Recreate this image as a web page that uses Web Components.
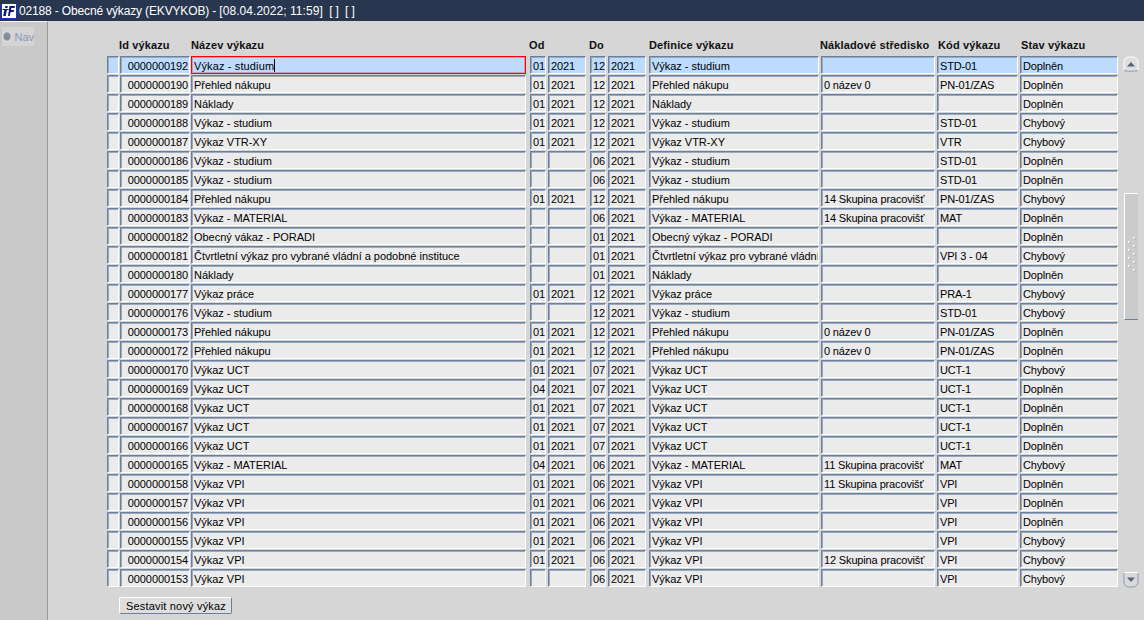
<!DOCTYPE html>
<html>
<head>
<meta charset="utf-8">
<title>Obecné výkazy</title>
<style>
  html, body { margin: 0; height: 100%; }
  body { font: 11px "Liberation Sans", Arial, sans-serif; color: #000; background: #d6d6d6; overflow: hidden; }
</style>
</head>
<body>
<app-window></app-window>
<script>
// same tracks for the header and for every row
const COLS = "13px 71px 339px 18px 42px 18px 41px 172px 116px 83px 99px";

const ROWS = [
  ["0000000192","Výkaz - studium","01","2021","12","2021","Výkaz - studium","","STD-01","Doplněn"],
  ["0000000190","Přehled nákupu","01","2021","12","2021","Přehled nákupu","0 název 0","PN-01/ZAS","Doplněn"],
  ["0000000189","Náklady","01","2021","12","2021","Náklady","","","Doplněn"],
  ["0000000188","Výkaz - studium","01","2021","12","2021","Výkaz - studium","","STD-01","Chybový"],
  ["0000000187","Výkaz VTR-XY","01","2021","12","2021","Výkaz VTR-XY","","VTR","Chybový"],
  ["0000000186","Výkaz - studium","","","06","2021","Výkaz - studium","","STD-01","Doplněn"],
  ["0000000185","Výkaz - studium","","","06","2021","Výkaz - studium","","STD-01","Doplněn"],
  ["0000000184","Přehled nákupu","01","2021","12","2021","Přehled nákupu","14 Skupina pracovišť","PN-01/ZAS","Chybový"],
  ["0000000183","Výkaz - MATERIAL","","","06","2021","Výkaz - MATERIAL","14 Skupina pracovišť","MAT","Doplněn"],
  ["0000000182","Obecný vákaz - PORADI","","","01","2021","Obecný výkaz - PORADI","","","Doplněn"],
  ["0000000181","Čtvrtletní výkaz pro vybrané vládní a podobné instituce","","","01","2021","Čtvrtletní výkaz pro vybrané vládní a podobné instituce","","VPI 3 - 04","Chybový"],
  ["0000000180","Náklady","","","01","2021","Náklady","","","Doplněn"],
  ["0000000177","Výkaz práce","01","2021","12","2021","Výkaz práce","","PRA-1","Chybový"],
  ["0000000176","Výkaz - studium","","","12","2021","Výkaz - studium","","STD-01","Chybový"],
  ["0000000173","Přehled nákupu","01","2021","12","2021","Přehled nákupu","0 název 0","PN-01/ZAS","Doplněn"],
  ["0000000172","Přehled nákupu","01","2021","12","2021","Přehled nákupu","0 název 0","PN-01/ZAS","Doplněn"],
  ["0000000170","Výkaz UCT","01","2021","07","2021","Výkaz UCT","","UCT-1","Chybový"],
  ["0000000169","Výkaz UCT","04","2021","07","2021","Výkaz UCT","","UCT-1","Doplněn"],
  ["0000000168","Výkaz UCT","01","2021","07","2021","Výkaz UCT","","UCT-1","Doplněn"],
  ["0000000167","Výkaz UCT","01","2021","07","2021","Výkaz UCT","","UCT-1","Doplněn"],
  ["0000000166","Výkaz UCT","01","2021","07","2021","Výkaz UCT","","UCT-1","Doplněn"],
  ["0000000165","Výkaz - MATERIAL","04","2021","06","2021","Výkaz - MATERIAL","11 Skupina pracovišť","MAT","Chybový"],
  ["0000000158","Výkaz VPI","01","2021","06","2021","Výkaz VPI","11 Skupina pracovišť","VPI","Doplněn"],
  ["0000000157","Výkaz VPI","01","2021","06","2021","Výkaz VPI","","VPI","Doplněn"],
  ["0000000156","Výkaz VPI","01","2021","06","2021","Výkaz VPI","","VPI","Doplněn"],
  ["0000000155","Výkaz VPI","01","2021","06","2021","Výkaz VPI","","VPI","Chybový"],
  ["0000000154","Výkaz VPI","01","2021","06","2021","Výkaz VPI","12 Skupina pracovišť","VPI","Chybový"],
  ["0000000153","Výkaz VPI","","","06","2021","Výkaz VPI","","VPI","Chybový"]
];

class TitleBar extends HTMLElement {
  constructor() {
    super();
    this.attachShadow({ mode: "open" });
    this.shadowRoot.innerHTML = `
      <style>
        :host { display: flex; align-items: center; height: 21px; background: #28374f; color: #fff; font-size: 12px; letter-spacing: -.15px; }
        svg { margin: 1px 2px 0 1px; flex: none; }
        span { white-space: pre; }
        ::slotted(span) { letter-spacing: .05px; }
      </style>
      <svg width="16" height="16" viewBox="0 0 16 16">
        <rect x="0.5" y="0.5" width="15" height="15" fill="#fff" stroke="#1a2fd0"/>
        <path d="M3.4 6.5h2.6l-1.3 6.5H2.2zM4.4 3h2.4l-.4 2H4z" fill="#0a1a70"/>
        <path d="M8.5 3H14l-.4 2h-3.2l-.4 2h3l-.4 2h-3l-.8 4H7z" fill="#0a1a70"/>
        <path d="M1.5 6.5h6" stroke="#0a1a70"/>
      </svg>
      <span><slot></slot></span>`;
  }
}
customElements.define("title-bar", TitleBar);

class NavPanel extends HTMLElement {
  constructor() {
    super();
    this.attachShadow({ mode: "open" });
    this.shadowRoot.innerHTML = `
      <style>
        :host { display: block; flex: none; box-sizing: border-box; width: 48px; background: #c9c9c9; border-top: 1px solid #f4f4f4; border-right: 1px solid #9a9a9a; padding: 5px 0 0 2px; }
        .tab { display: flex; align-items: center; gap: 2px; width: 32px; height: 19px; background: #d4d4d4; color: #8c9ab5; font-size: 11px; }
        i { box-sizing: border-box; width: 11px; height: 11px; border-radius: 50%; background: #858c98; border: 1px solid #e4e4e4; box-shadow: inset 0 0 0 1px #aeb3bc; }
      </style>
      <div class="tab"><i></i><span>Nav</span></div>`;
  }
}
customElements.define("nav-panel", NavPanel);

class FormField extends HTMLElement {
  constructor() {
    super();
    this.attachShadow({ mode: "open" });
    this.shadowRoot.innerHTML = `
      <style>
        :host { display: block; box-sizing: border-box; height: 19px; min-width: 0; padding-bottom: 1px; }
        .box { box-sizing: border-box; height: 18px; padding: 2px 1px 0 2px; line-height: 15px; overflow: hidden; white-space: nowrap;
               background: #ebebeb; border: 1px solid; border-color: #6b7f9f #fff #fff #6b7f9f; border-radius: 1px; box-shadow: inset 1px 1px 0 #9aa9c0; font-size: 11px; letter-spacing: -.03px; }
        :host([right]) .box { text-align: right; letter-spacing: -.1px; }
        :host([num]) .box { letter-spacing: -.1px; padding-right: 0; }
        :host([tight]) .box { letter-spacing: -.15px; }
        :host([selected]) .box { background: #bddcfd; }
        :host([focused]) .box { border-color: #f00; border-radius: 0; box-shadow: inset 0 0 0 1px rgba(255, 0, 0, .3); letter-spacing: .13px; }
        .caret { display: none; width: 1px; height: 13px; background: #000; vertical-align: -2px; }
        :host([focused]) .caret { display: inline-block; }
      </style>
      <div class="box"><slot></slot><span class="caret"></span></div>`;
  }
}
customElements.define("form-field", FormField);

class ReportRow extends HTMLElement {
  constructor() {
    super();
    this.attachShadow({ mode: "open" });
    this.shadowRoot.innerHTML = `
      <style>
        :host { display: grid; grid-template-columns: ${COLS}; height: 19px; }
        form-field { margin-right: 2px; }
        form-field:nth-of-type(1), form-field:nth-of-type(2), form-field:nth-of-type(11) { margin-right: 1px; }
        form-field:nth-of-type(3), form-field:nth-of-type(5) { margin-right: 4px; }
        form-field:nth-of-type(7) { margin-right: 3px; }
      </style>`;
  }
  set data(values) {
    const first = this.hasAttribute("selected");
    ["", ...values].forEach((text, i) => {
      const f = document.createElement("form-field");
      f.textContent = text;
      if (i === 1) f.setAttribute("right", "");
      if (i >= 3 && i <= 6) f.setAttribute("num", "");
      if (i >= 8) f.setAttribute("tight", "");
      if (first) f.setAttribute("selected", "");
      if (first && i === 2) f.setAttribute("focused", "");
      this.shadowRoot.appendChild(f);
    });
  }
}
customElements.define("report-row", ReportRow);

class ReportHeader extends HTMLElement {
  constructor() {
    super();
    this.attachShadow({ mode: "open" });
    // small nudges: labels do not sit exactly on the field edges
    const labels = [["", 0], ["Id výkazu", -1], ["Název výkazu", 0], ["Od", -1], ["", 0], ["Do", -1], ["", 0],
      ["Definice výkazu", 0], ["Nákladové středisko", -1], ["Kód výkazu", 1], ["Stav výkazu", 1]];
    this.shadowRoot.innerHTML = `
      <style>
        :host { display: grid; grid-template-columns: ${COLS}; height: 21px; font-weight: bold; font-size: 11px; letter-spacing: .13px; color: #111; }
        div { white-space: nowrap; line-height: 20px; }
      </style>
      ${labels.map(l => `<div style="margin-left:${l[1]}px">${l[0]}</div>`).join("")}`;
  }
}
customElements.define("report-header", ReportHeader);

class ScrollBar extends HTMLElement {
  constructor() {
    super();
    this.attachShadow({ mode: "open" });
    let dots = "";
    for (let i = 0; i < 5; i++) dots += `<rect x="9" y="${i * 8}" width="2" height="2" fill="#f4f4f4"/><rect x="10" y="${i * 8 + 1}" width="2" height="2" fill="#b6bfce"/>`;
    for (let i = 0; i < 4; i++) dots += `<rect x="4" y="${i * 8 + 4}" width="2" height="2" fill="#f4f4f4"/><rect x="5" y="${i * 8 + 5}" width="2" height="2" fill="#b6bfce"/>`;
    this.shadowRoot.innerHTML = `
      <style>
        :host { display: flex; flex-direction: column; align-items: flex-start; flex: none; width: 16px; margin-left: 5px; height: 532px; }
        .btn { display: block; margin-left: -1px; }
        .thumb { box-sizing: border-box; width: 14px; height: 127px; margin-top: 121px; background: #cbcbcb; border-top: 1px solid #fff; border-left: 1px solid #fff; border-bottom: 1px solid #6b7f9f; padding-top: 43px; }
        .thumb svg { display: block; margin-left: -1px; }
        .down { margin-top: auto; }
      </style>
      <svg class="btn" width="16" height="16" viewBox="0 0 16 16">
        <path d="M1 15V6a5 5 0 0 1 5-5h4a5 5 0 0 1 5 5v9" fill="#dfdfdf" stroke="#fff"/>
        <path d="M1 14.5c4 1 10 1 14 0" fill="none" stroke="#8e9db5"/>
        <path d="M4 10.5l4-4.5 4 4.5z" fill="#56657f"/>
      </svg>
      <div class="thumb"><svg width="13" height="36" viewBox="0 0 13 36">${dots}</svg></div>
      <svg class="btn down" width="16" height="16" viewBox="0 0 16 16">
        <path d="M1 1v9a5 5 0 0 0 5 5h4a5 5 0 0 0 5-5V1" fill="#d9d9d9" stroke="#8e9db5"/>
        <path d="M1 .5h14" stroke="#fff"/>
        <path d="M4 5.5l4 4.5 4-4.5z" fill="#56657f"/>
      </svg>`;
  }
}
customElements.define("scroll-bar", ScrollBar);

class PlainButton extends HTMLElement {
  constructor() {
    super();
    this.attachShadow({ mode: "open" });
    this.shadowRoot.innerHTML = `
      <style>
        :host { display: inline-block; box-sizing: border-box; height: 17px; line-height: 16px; padding: 0 5px 0 6px; background: #dedede; border: 1px solid; border-color: #fff #6b7f9f #6b7f9f #fff; border-radius: 2px; font-size: 11px; letter-spacing: .18px; }
      </style>
      <slot></slot>`;
  }
}
customElements.define("plain-button", PlainButton);

class AppWindow extends HTMLElement {
  constructor() {
    super();
    this.attachShadow({ mode: "open" });
    this.shadowRoot.innerHTML = `
      <style>
        :host { display: flex; flex-direction: column; width: 1144px; height: 620px; }
        .body { display: flex; flex: 1; min-height: 0; }
        .main { flex: 1; padding: 14px 0 0 59px; }
        .table { display: flex; }
        .foot { margin: 9px 0 0 12px; }
      </style>
      <title-bar>02188 - Obecné výkazy (EKVYKOB) - <span>[08.04.2022; 11:59]</span>  [ ]  [ ]</title-bar>
      <div class="body">
        <nav-panel></nav-panel>
        <div class="main">
          <report-header></report-header>
          <div class="table">
            <div id="rows"></div>
            <scroll-bar></scroll-bar>
          </div>
          <div class="foot"><plain-button>Sestavit nový výkaz</plain-button></div>
        </div>
      </div>`;
    const box = this.shadowRoot.querySelector("#rows");
    ROWS.forEach((r, i) => {
      const row = document.createElement("report-row");
      if (i === 0) row.setAttribute("selected", "");
      row.data = r;
      box.appendChild(row);
    });
  }
}
customElements.define("app-window", AppWindow);
</script>
</body>
</html>
